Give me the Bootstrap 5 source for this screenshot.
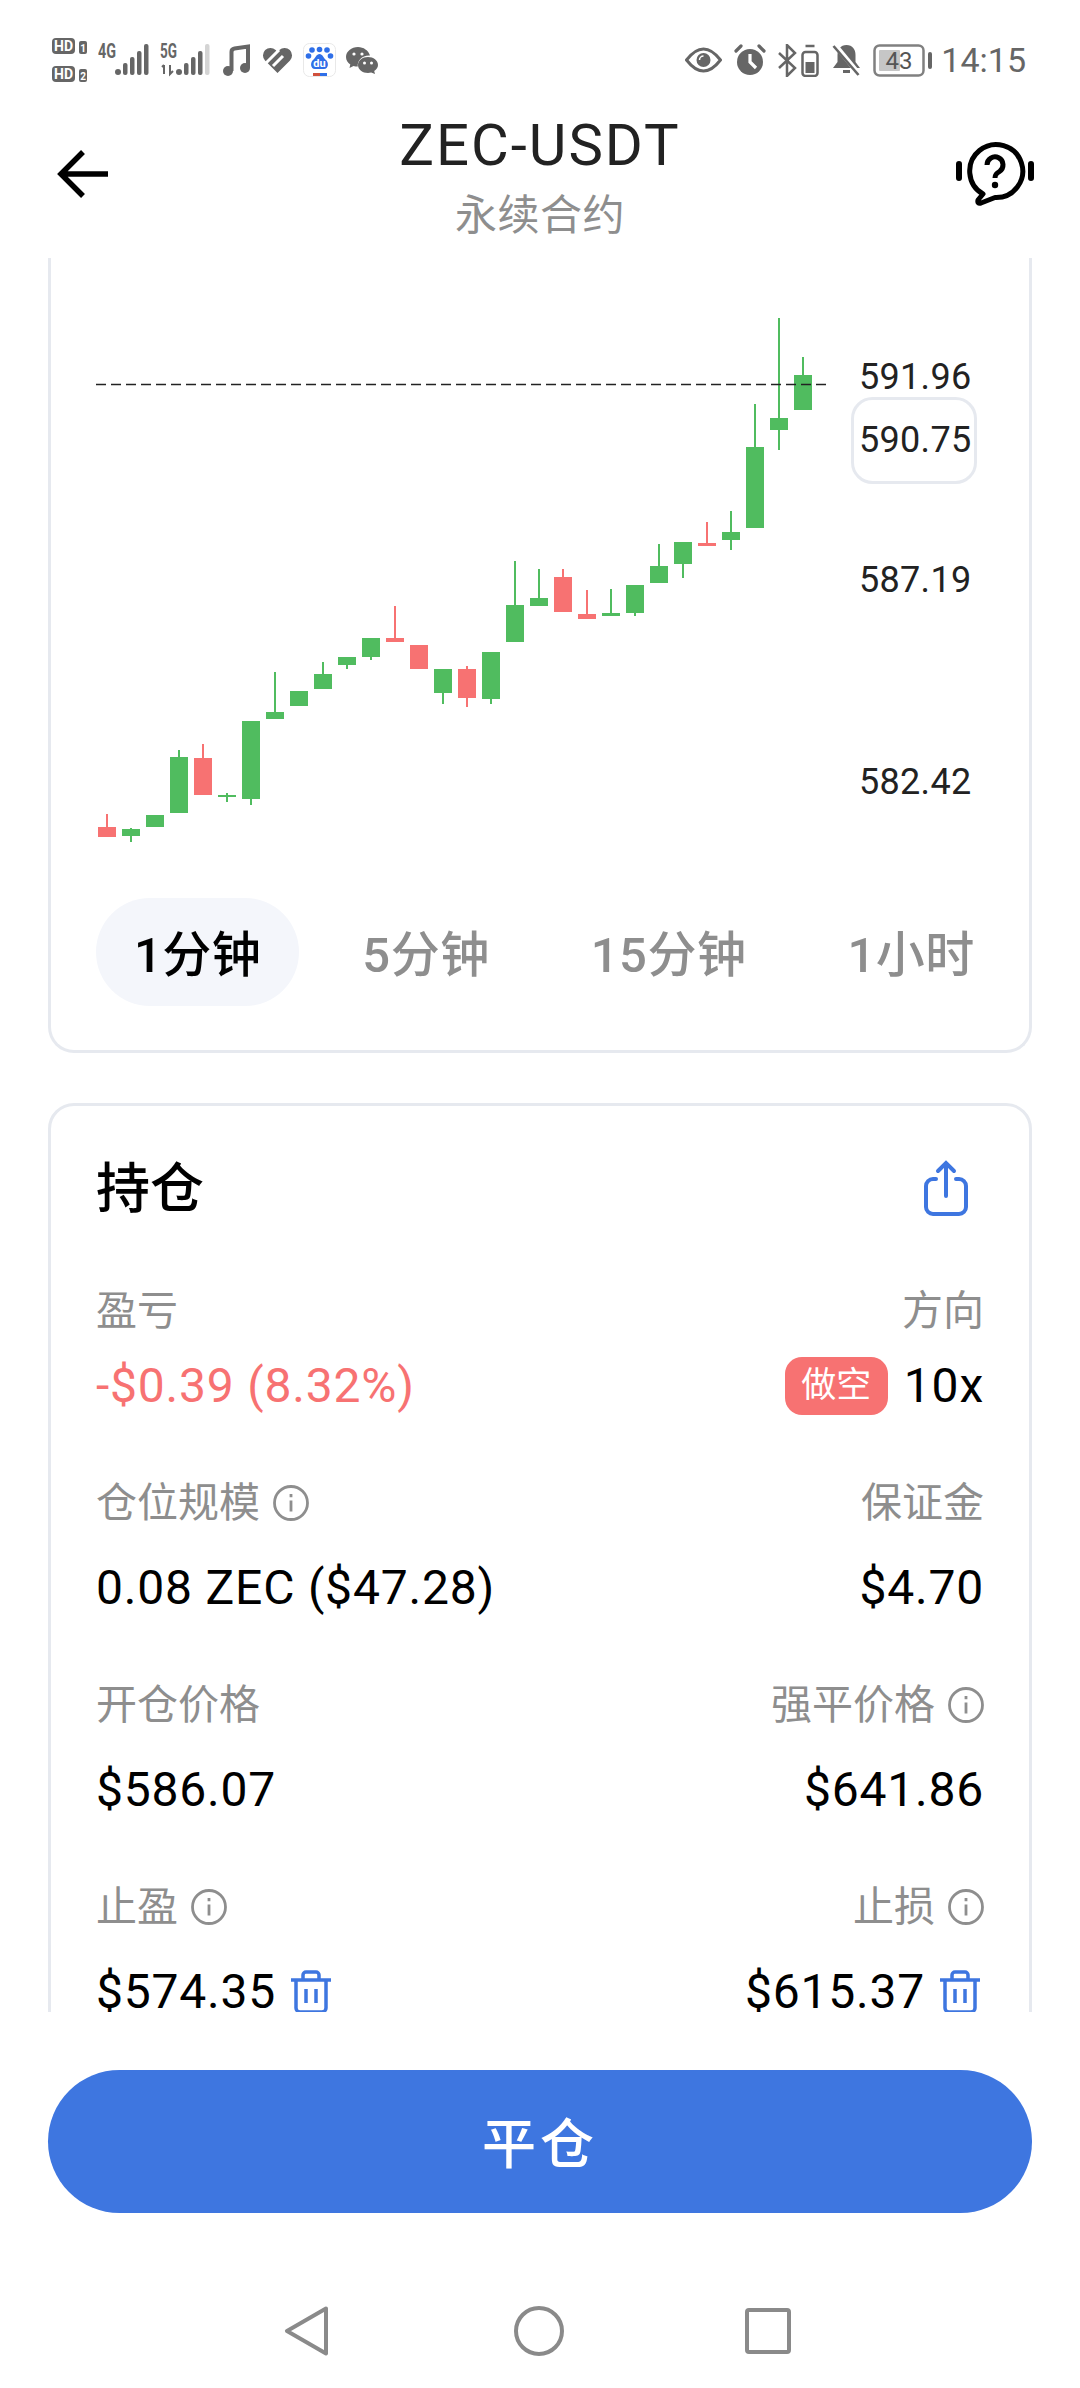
<!DOCTYPE html>
<html lang="zh">
<head>
  <meta charset="UTF-8">
  <title>ZEC-USDT</title>
  <link href="https://cdn.jsdelivr.net/npm/bootstrap@5.3.0/dist/css/bootstrap.min.css" rel="stylesheet">
  <style>
    html, body { height: 2388px; overflow: hidden; }
    body { font-family: Roboto, "Noto Sans CJK SC", sans-serif; color: #000; background: #fff; }
    .screen { height: 2388px; }

    .status-bar { height: 100px; padding: 20px 54px 0 52px; color: #666; }
    .status-left, .status-right { gap: 10px; }
    .status-right { gap: 12px; }
    .clock { font-size: 34px; line-height: 40px; margin-left: -4px; }
    .sb-text { font-family: Roboto, sans-serif; font-weight: 700; fill: #666; }
    .sb-text-inv { font-family: Roboto, sans-serif; font-weight: 700; fill: #fff; }

    .app-head { height: 158px; padding: 0 46px 10px; }
    .head-side { flex: 1 1 0; }
    .back-ico { margin-left: 11px; }
    .head-title { align-self: flex-start; margin-top: 15px; }
    .pair-name { font-size: 58px; line-height: 60px; letter-spacing: 2px; color: #222; }
    .pair-type { font-size: 42px; line-height: 52px; margin-top: 15px; letter-spacing: .5px; color: #8e8e8e; }

    .scroll-area { height: 1754px; overflow: hidden; padding: 0 48px; flex: none; }
    .panel { border: 3px solid #e6e9ef; border-radius: 26px; background: #fff; }
    .panel-chart { border-top: 0; border-top-left-radius: 0; border-top-right-radius: 0; padding-bottom: 44px; }
    .panel-pos { margin-top: 50px; padding: 54px 45px 60px; }
    .chart-svg { display: block; width: 978px; height: 640px; }
    .axis-text { font-family: Roboto, sans-serif; font-size: 36px; letter-spacing: .3px; fill: #222; }

    .range-tabs { padding-left: 45px; gap: 25px; }
    .range-tab { height: 108px; padding: 0 38px; border-radius: 54px; font-size: 49px; font-weight: 500; letter-spacing: .5px; line-height: 116px; color: #8e8e8e; white-space: nowrap; }
    .range-tab.on { background: #f4f6fb; color: #000; }

    .pos-title { font-size: 54px; font-weight: 500; line-height: 56px; padding-top: 2px; margin-bottom: -2px; }
    .pos-row { margin-top: 60px; }
    .pos-row.first { margin-top: 67px; }
    .pos-label { font-size: 41px; line-height: 56px; color: #8e8e8e; gap: 13px; }
    .pos-value { font-size: 48px; line-height: 58px; letter-spacing: .8px; margin-top: 28px; gap: 14px; }
    .pos-row.first .pos-value { margin-top: 18px; gap: 16px; }
    .val-loss { color: #f77272; }
    .side-tag { background: #f77272; color: #fff; font-size: 35px; line-height: 58px; width: 103px; text-align: center; border-radius: 17px; letter-spacing: 0; }
    .trash-end { margin-right: 3px; }

    .foot { height: 376px; padding: 58px 48px 0; flex: none; }
    .close-btn { height: 143px; border-radius: 72px; background: #3e76e0; border: 0; color: #fff; font-size: 54px; font-weight: 500; letter-spacing: 4px; padding: 8px 0 0; }
    .close-btn:hover { background: #3e76e0; color: #fff; }
    .sys-nav { margin-top: 93px; gap: 184px; padding-right: 6px; }
    .nav-square { margin-left: -3px; }
  </style>
</head>
<body>
<div class="screen d-flex flex-column">

  <div class="status-bar d-flex align-items-center flex-none">
    <div class="status-left d-flex align-items-center">
      <svg width="36" height="48" viewBox="0 0 36 48">
        <rect x="0" y="2" width="23" height="16" rx="4" fill="#666"/>
        <text x="11.500" y="15" text-anchor="middle" font-size="14" class="sb-text-inv">HD</text>
        <rect x="27" y="5" width="8" height="13" rx="2" fill="#666"/>
        <text x="31" y="16" text-anchor="middle" font-size="10" class="sb-text-inv">1</text>
        <rect x="0" y="30" width="23" height="16" rx="4" fill="#666"/>
        <text x="11.500" y="43" text-anchor="middle" font-size="14" class="sb-text-inv">HD</text>
        <rect x="27" y="33" width="8" height="13" rx="2" fill="#666"/>
        <text x="31" y="44" text-anchor="middle" font-size="10" class="sb-text-inv">2</text>
      </svg>
      <svg width="52" height="42" viewBox="0 -4 52 42">
        <text x="0" y="15" font-size="20" textLength="18" lengthAdjust="spacingAndGlyphs" class="sb-text">4G</text>
        <circle cx="20" cy="29" r="3" fill="#666"/>
        <rect x="25" y="20" width="4.500" height="12" rx="2" fill="#666"/>
        <rect x="32" y="14" width="4.500" height="18" rx="2" fill="#666"/>
        <rect x="39" y="8" width="4.500" height="24" rx="2" fill="#666"/>
        <rect x="46" y="1" width="4.500" height="31" rx="2" fill="#666"/>
      </svg>
      <svg width="52" height="42" viewBox="0 -4 52 42">
        <text x="0" y="15" font-size="20" textLength="17" lengthAdjust="spacingAndGlyphs" class="sb-text">5G</text>
        <path d="M4 31V22M2 24l2-2M10 22v9l3-3" fill="none" stroke="#666" stroke-width="2"/>
        <circle cx="19" cy="29" r="3" fill="#666"/>
        <rect x="24" y="20" width="4.500" height="12" rx="2" fill="#666"/>
        <rect x="31" y="14" width="4.500" height="18" rx="2" fill="#666"/>
        <rect x="38" y="8" width="4.500" height="24" rx="2" fill="#666"/>
        <rect x="45" y="1" width="4.500" height="31" rx="2" fill="#d4d4d4"/>
      </svg>
      <svg width="30" height="34" viewBox="0 0 30 34">
        <circle cx="6" cy="28" r="5" fill="#666"/>
        <circle cx="23" cy="25" r="5" fill="#666"/>
        <path d="M9.500 28V9q0-3 3-3.500L26 3.500V25" fill="none" stroke="#666" stroke-width="4"/>
      </svg>
      <svg width="31" height="28" viewBox="0 0 31 28">
        <path d="M15.500 27 3 14.500A7.500 7.500 0 0 1 13.600 3.900L15.500 5.800l1.900-1.900A7.500 7.500 0 0 1 28 14.500Z" fill="#666"/>
        <path d="M2 19 17 4M11 20 21 10" stroke="#fff" stroke-width="3" fill="none"/>
      </svg>
      <svg width="33" height="34" viewBox="0 0 33 34">
        <rect x=".5" y=".5" width="32" height="33" rx="6" fill="#fff" stroke="#e8e8e8"/>
        <circle cx="16.500" cy="6.500" r="2.800" fill="#2f6fe8"/>
        <circle cx="24" cy="7" r="2.800" fill="#2f6fe8"/>
        <circle cx="9" cy="7" r="2.800" fill="#2f6fe8"/>
        <circle cx="5.500" cy="13" r="2.800" fill="#2f6fe8"/>
        <circle cx="27.500" cy="13" r="2.800" fill="#2f6fe8"/>
        <path d="M16.500 11c-3 0-4 4-6.500 6-3 2.500-2.500 9 2 9h9c4.500 0 5-6.500 2-9-2.500-2-3.500-6-6.500-6Z" fill="#2f6fe8"/>
        <text x="16.500" y="24" text-anchor="middle" font-size="11" class="sb-text-inv">du</text>
        <rect x="10" y="30" width="7" height="3" fill="#d0503c"/>
        <rect x="17" y="30" width="7" height="3" fill="#2f6fe8"/>
      </svg>
      <svg width="32" height="28" viewBox="0 0 32 28">
        <path d="M12 1C5.500 1 0 5.500 0 11c0 3 1.700 5.700 4.300 7.500L3.500 22l4-2c1.300.4 2.700.6 4.300.6C11 15 16 9 24 9.500 22.500 4.500 17.500 1 12 1Z" fill="#666"/>
        <path d="M22 11c-5.500 0-10 3.500-10 8s4.500 8 10 8c1 0 2.200-.2 3.200-.5l3.800 1.500-.8-3c2.400-1.500 3.800-3.700 3.800-6 0-4.500-4.500-8-10-8Z" fill="#666"/>
        <circle cx="8" cy="8" r="1.600" fill="#fff"/><circle cx="16" cy="8" r="1.600" fill="#fff"/>
        <circle cx="18.500" cy="17" r="1.500" fill="#fff"/><circle cx="25.500" cy="17" r="1.500" fill="#fff"/>
      </svg>
    </div>

    <div class="status-right d-flex align-items-center ms-auto">
      <svg width="37" height="28" viewBox="0 0 37 28">
        <path d="M1.500 14Q18.500-8 35.500 14 18.500 36 1.500 14Z" fill="none" stroke="#666" stroke-width="3"/>
        <circle cx="18.500" cy="14" r="7" fill="#666"/>
        <path d="M14.500 14a4 4 0 0 1 4-4" stroke="#fff" stroke-width="1.500" fill="none"/>
      </svg>
      <svg width="32" height="32" viewBox="0 0 32 32">
        <circle cx="16" cy="18" r="13" fill="#666"/>
        <path d="M16 10v8l6 6" stroke="#fff" stroke-width="3.200" fill="none"/>
        <path d="M2 7l5-5M30 7l-5-5" stroke="#666" stroke-width="3.200" stroke-linecap="round"/>
      </svg>
      <svg width="42" height="33" viewBox="0 0 42 33">
        <path d="M1 9l16 15-8 8V1l8 8L1 24" fill="none" stroke="#666" stroke-width="2.500"/>
        <rect x="24.500" y="8" width="15" height="24" rx="3" fill="none" stroke="#666" stroke-width="2.500"/>
        <path d="M27.500 2h9" stroke="#666" stroke-width="2.500"/>
        <rect x="27.500" y="18" width="9" height="11" fill="#666"/>
      </svg>
      <svg width="29" height="32" viewBox="0 0 29 32">
        <path d="M14.500 1c-6 0-9 4.500-9 10v7L1 24h27l-4.500-6v-7c0-5.500-3-10-9-10Z" fill="#666"/>
        <path d="M11 27.500h7" stroke="#666" stroke-width="3"/>
        <path d="M3 1l24 29" stroke="#fff" stroke-width="5"/>
        <path d="M1.500 2l25 29" stroke="#666" stroke-width="2.600"/>
      </svg>
      <svg width="60" height="33" viewBox="0 0 60 33">
        <rect x="1.500" y="1.500" width="49" height="30" rx="5" fill="none" stroke="#808080" stroke-width="2.500"/>
        <rect x="6" y="6" width="21" height="21" rx="1" fill="#c6c6c6"/>
        <text x="26" y="25" text-anchor="middle" font-size="24" font-family="Roboto" fill="#555">43</text>
        <rect x="55" y="8" width="4" height="17" rx="2" fill="#666"/>
      </svg>
      <span class="clock">14:15</span>
    </div>
  </div>

  <div class="app-head d-flex align-items-center flex-none">
    <div class="head-side">
      <svg class="back-ico" width="52" height="50" viewBox="0 0 52 50">
        <path d="M51 25H5M26 3 4 25l22 22" fill="none" stroke="#000" stroke-width="5.500"/>
      </svg>
    </div>
    <div class="head-title text-center">
      <div class="pair-name">ZEC-USDT</div>
      <div class="pair-type">永续合约</div>
    </div>
    <div class="head-side text-end">
      <svg width="78" height="66" viewBox="0 0 78 66">
        <path d="M27 53A26.500 26.500 0 1 1 39 56.500L25 62q-4 1-3-3Z" fill="none" stroke="#000" stroke-width="5" stroke-linejoin="round"/>
        <path d="M31 24a8 8 0 1 1 12.500 6.500c-3 2-4.500 3-4.500 6.500" fill="none" stroke="#000" stroke-width="5"/>
        <circle cx="39" cy="44" r="3.200" fill="#000"/>
        <path d="M3 23v14M75 23v14" stroke="#000" stroke-width="6" stroke-linecap="round"/>
      </svg>
    </div>
  </div>

  <div class="scroll-area">
    <div class="panel panel-chart">
      <svg id="chart" class="chart-svg" viewBox="51 258 978 640">
        <rect x="852.500" y="398.500" width="123" height="84" rx="20" fill="#fff" stroke="#e6e9ef" stroke-width="3"/>
        <text class="axis-text" x="859" y="389">591.96</text>
        <text class="axis-text" x="859" y="452">590.75</text>
        <text class="axis-text" x="859" y="592">587.19</text>
        <text class="axis-text" x="859" y="794">582.42</text>
      </svg>
      <div class="range-tabs d-flex">
        <div class="range-tab on">1分钟</div>
        <div class="range-tab">5分钟</div>
        <div class="range-tab">15分钟</div>
        <div class="range-tab">1小时</div>
      </div>
    </div>

    <div class="panel panel-pos">
      <div class="d-flex justify-content-between align-items-center">
        <div class="pos-title">持仓</div>
        <svg class="me-3" width="44" height="56" viewBox="0 0 44 56">
          <path d="M12 19H9a7 7 0 0 0-7 7v21a7 7 0 0 0 7 7h26a7 7 0 0 0 7-7V26a7 7 0 0 0-7-7h-3M22 36V4M14 11l8-8 8 8" fill="none" stroke="#3e76e0" stroke-width="4" stroke-linecap="round"/>
        </svg>
      </div>

      <div class="row g-0 pos-row first">
        <div class="col-6">
          <div class="pos-label">盈亏</div>
          <div class="pos-value val-loss">-$0.39 (8.32%)</div>
        </div>
        <div class="col-6">
          <div class="pos-label d-flex justify-content-end">方向</div>
          <div class="pos-value d-flex justify-content-end"><span class="side-tag">做空</span><span>10x</span></div>
        </div>
      </div>

      <div class="row g-0 pos-row">
        <div class="col-6">
          <div class="pos-label d-flex align-items-center">仓位规模
            <svg width="36" height="36" viewBox="0 0 36 36"><use href="#ico-info"/></svg>
          </div>
          <div class="pos-value">0.08 ZEC ($47.28)</div>
        </div>
        <div class="col-6">
          <div class="pos-label d-flex justify-content-end">保证金</div>
          <div class="pos-value d-flex justify-content-end">$4.70</div>
        </div>
      </div>

      <div class="row g-0 pos-row">
        <div class="col-6">
          <div class="pos-label">开仓价格</div>
          <div class="pos-value">$586.07</div>
        </div>
        <div class="col-6">
          <div class="pos-label d-flex justify-content-end align-items-center">强平价格
            <svg width="36" height="36" viewBox="0 0 36 36"><use href="#ico-info"/></svg>
          </div>
          <div class="pos-value d-flex justify-content-end">$641.86</div>
        </div>
      </div>

      <div class="row g-0 pos-row">
        <div class="col-6">
          <div class="pos-label d-flex align-items-center">止盈
            <svg width="36" height="36" viewBox="0 0 36 36"><use href="#ico-info"/></svg>
          </div>
          <div class="pos-value d-flex align-items-center">$574.35
            <svg width="42" height="44" viewBox="0 0 42 44"><use href="#ico-trash"/></svg>
          </div>
        </div>
        <div class="col-6">
          <div class="pos-label d-flex justify-content-end align-items-center">止损
            <svg width="36" height="36" viewBox="0 0 36 36"><use href="#ico-info"/></svg>
          </div>
          <div class="pos-value d-flex justify-content-end align-items-center">$615.37
            <svg class="trash-end" width="42" height="44" viewBox="0 0 42 44"><use href="#ico-trash"/></svg>
          </div>
        </div>
      </div>
    </div>
  </div>

  <div class="foot">
    <button type="button" class="btn close-btn w-100">平仓</button>
    <div class="sys-nav d-flex justify-content-center align-items-center">
      <svg width="46" height="50" viewBox="0 0 46 50">
        <path d="M42 2.500 3 25l39 22.500Z" fill="none" stroke="#8a8a8a" stroke-width="4" stroke-linejoin="round"/>
      </svg>
      <svg width="50" height="50" viewBox="0 0 50 50">
        <circle cx="25" cy="25" r="23" fill="none" stroke="#8a8a8a" stroke-width="4"/>
      </svg>
      <svg class="nav-square" width="46" height="46" viewBox="0 0 46 46">
        <rect x="2" y="2" width="42" height="42" rx="2" fill="none" stroke="#8a8a8a" stroke-width="4"/>
      </svg>
    </div>
  </div>
</div>

<svg width="0" height="0" class="position-absolute">
  <defs>
    <g id="ico-info" fill="none" stroke="#8e8e8e" stroke-width="2.800">
      <circle cx="18" cy="18" r="16.500"/>
      <path d="M18 15.500v11M18 9v3.200"/>
    </g>
    <g id="ico-trash" fill="none" stroke="#3e76e0" stroke-width="3.500">
      <path d="M1 10h40M13 9V5a3 3 0 0 1 3-3h10a3 3 0 0 1 3 3v4M6 10v28a4 4 0 0 0 4 4h22a4 4 0 0 0 4-4V10M16 19v14M26 19v14"/>
    </g>
  </defs>
</svg>

<script>
const GREEN = "#50bc5f";
const RED = "#f77272";
// [color, bodyTop, bodyBottom, wickTop, wickBottom] in page pixels
const candles = [
  [RED, 827, 837, 814, 837], [GREEN, 829, 836, 828, 842], [GREEN, 815, 827, 815, 827],
  [GREEN, 757, 813, 750, 813], [RED, 758, 795, 744, 795], [GREEN, 795, 797, 793, 802],
  [GREEN, 721, 799, 721, 805], [GREEN, 712, 719, 672, 719], [GREEN, 691, 706, 691, 706],
  [GREEN, 674, 689, 662, 689], [GREEN, 657, 665, 657, 669], [GREEN, 638, 657, 638, 660],
  [RED, 638, 642, 606, 642], [RED, 645, 669, 645, 669], [GREEN, 669, 693, 669, 704],
  [RED, 669, 698, 666, 707], [GREEN, 652, 699, 652, 704], [GREEN, 605, 642, 561, 642],
  [GREEN, 598, 606, 569, 606], [RED, 577, 612, 569, 612], [RED, 614, 619, 590, 619],
  [GREEN, 613, 616, 589, 616], [GREEN, 585, 613, 585, 616], [GREEN, 566, 583, 544, 583],
  [GREEN, 542, 564, 542, 578], [RED, 543, 546, 522, 546], [GREEN, 532, 540, 511, 550],
  [GREEN, 447, 528, 404, 528], [GREEN, 418, 430, 318, 450], [GREEN, 375, 410, 357, 410]
];

const chart = document.getElementById("chart");
const NS = "http://www.w3.org/2000/svg";

function addRect(x, y, w, h, fill) {
  const r = document.createElementNS(NS, "rect");
  r.setAttribute("x", x);
  r.setAttribute("y", y);
  r.setAttribute("width", w);
  r.setAttribute("height", h);
  r.setAttribute("fill", fill);
  chart.appendChild(r);
}

candles.forEach((c, i) => {
  const cx = 107 + 24 * i;
  addRect(cx - 1, c[3], 2, c[4] - c[3], c[0]);
  addRect(cx - 9, c[1], 18, c[2] - c[1], c[0]);
});

const line = document.createElementNS(NS, "line");
line.setAttribute("x1", 96);
line.setAttribute("x2", 827);
line.setAttribute("y1", 384.5);
line.setAttribute("y2", 384.5);
line.setAttribute("stroke", "#222");
line.setAttribute("stroke-width", 1.5);
line.setAttribute("stroke-dasharray", "10 5");
chart.appendChild(line);
</script>
<script src="https://cdn.jsdelivr.net/npm/bootstrap@5.3.0/dist/js/bootstrap.bundle.min.js"></script>
</body>
</html>
